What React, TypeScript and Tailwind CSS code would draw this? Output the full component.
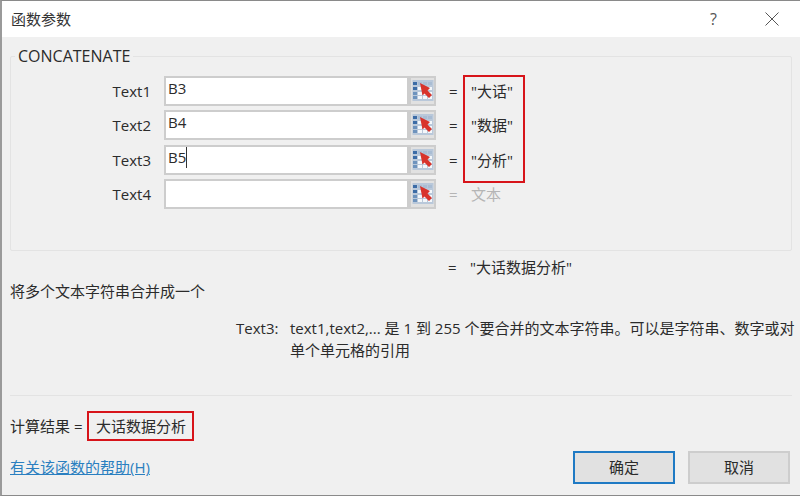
import React from 'react';

const FONT = '"Open Sans", "Noto Sans CJK SC", sans-serif';

const sheetCols = [1, 6, 11, 16];
const sheetRows = [3, 8, 13, 17];

// range-picker button glyph: little sheet with a red arrow on top
const RefIcon = () => (
  <svg width="22" height="24" viewBox="0 0 22 24">
    <rect x="0.5" y="1" width="21" height="21" fill="#b9c8da" />
    {sheetRows.map((y, i) =>
      sheetCols.map((x, j) => (
        <rect
          key={`${x}-${y}`}
          x={x}
          y={y}
          width="4"
          height="3"
          fill={j === 0 ? (i < 2 ? '#3c6ca6' : '#6e93bd') : i === 0 ? '#a9bdd4' : '#f4f7fa'}
        />
      ))
    )}
    <path d="M8 4 L18 9 L15.5 11.5 L20 16 L17 19 L12.5 14.5 L10.5 16.5 Z" fill="#d8342c" />
  </svg>
);

const rows = [
  { label: 'Text1', value: 'B3', result: '"大话"', top: 'mt-[19px]' },
  { label: 'Text2', value: 'B4', result: '"数据"', top: 'mt-[4px]' },
  { label: 'Text3', value: 'B5', result: '"分析"', top: 'mt-[5px]', caret: true },
  { label: 'Text4', value: '', result: '文本', top: 'mt-[4px]', muted: true },
];

const App: React.FC = () => {
  return (
    <div
      className="w-[800px] h-[496px] overflow-hidden flex flex-col bg-[#f0f0f0] border-t border-b border-t-[#8a8a8a] border-b-[#8a8a8a] border-l-2 border-l-[#9a9a9a] text-[15px] text-[#2b2b2b]"
      style={{ fontFamily: FONT }}
    >
      <div className="h-[36px] shrink-0 bg-white flex items-center justify-between pl-[9px] pr-[21px]">
        <span className="text-[15px] leading-[36px] text-[#333]">函数参数</span>
        <div className="flex items-center gap-[48px]">
          <span className="text-[16px] text-[#555]">?</span>
          <svg width="14" height="14" viewBox="0 0 14 14" fill="none" stroke="#555" strokeWidth="1">
            <path d="M0.5 0.5 L13.5 13.5 M13.5 0.5 L0.5 13.5" />
          </svg>
        </div>
      </div>

      <div className="mx-[8px] mt-[19px] h-[195px] shrink-0 relative border border-[#e3e3e3] rounded-[2px]">
        <span className="absolute left-[4px] top-[-11px] px-[3px] bg-[#f0f0f0] text-[16px] leading-[20px]">CONCATENATE</span>
        {rows.map((r) => (
          <div key={r.label} className={`flex items-center h-[30px] ${r.top}`}>
            <span className="w-[140px] text-right leading-[30px]">{r.label}</span>
            <div className="ml-[13px] w-[245px] h-[30px] bg-white border-2 border-[#cdcdcd] pl-[2px] flex items-start leading-[20px]">
              <span>{r.value}</span>
              {r.caret && <span className="w-px h-[21px] bg-[#333]" />}
            </div>
            <div className="w-[27px] h-[30px] bg-[#e1e1e1] border-2 border-[#cdcdcd] flex items-center justify-center">
              <RefIcon />
            </div>
            <span className={`ml-[13px] w-[22px] ${r.muted ? 'text-[#b5b5b5]' : ''}`}>=</span>
            <span className={r.muted ? 'text-[#b5b5b5]' : ''}>{r.result}</span>
          </div>
        ))}
        {/* red annotation over the values */}
        <div className="absolute left-[452px] top-[18px] w-[62px] h-[108px] border-2 border-[#d7141a]" />
      </div>

      <div className="h-[26px] shrink-0 flex items-end pl-[446px] leading-[20px]">
        <span className="w-[22px]">=</span>
        <span>"大话数据分析"</span>
      </div>
      <div className="mt-[2px] pl-[8px] leading-[24px]">将多个文本字符串合并成一个</div>

      <div className="mt-[14px] h-[58px] shrink-0 flex pl-[234px] leading-[22px]">
        <span className="w-[54px]">Text3:</span>
        <p className="w-[510px]">text1,text2,... 是 1 到 255 个要合并的文本字符串。可以是字符串、数字或对单个单元格的引用</p>
      </div>

      <div className="mx-[8px] mt-[20px] border-t border-[#e3e3e3]" />

      <div className="mt-[15px] pl-[8px] flex items-center">
        <span className="mr-[5px]">计算结果 =</span>
        <span className="h-[30px] w-[107px] border-2 border-[#d7141a] flex items-center justify-center">大话数据分析</span>
      </div>

      <div className="flex items-start justify-between pl-[8px] pr-[10px] mt-[10px]">
        <a className="mt-[6px] leading-[20px] text-[#2a7fc0] underline">有关该函数的帮助(H)</a>
        <div className="flex gap-[13px]">
          <button className="w-[102px] h-[33px] bg-[#e1e1e1] border-2 border-[#1f7ac4]">确定</button>
          <button className="w-[102px] h-[33px] bg-[#e1e1e1] border-2 border-[#cdcdcd]">取消</button>
        </div>
      </div>
    </div>
  );
};

export default App;
